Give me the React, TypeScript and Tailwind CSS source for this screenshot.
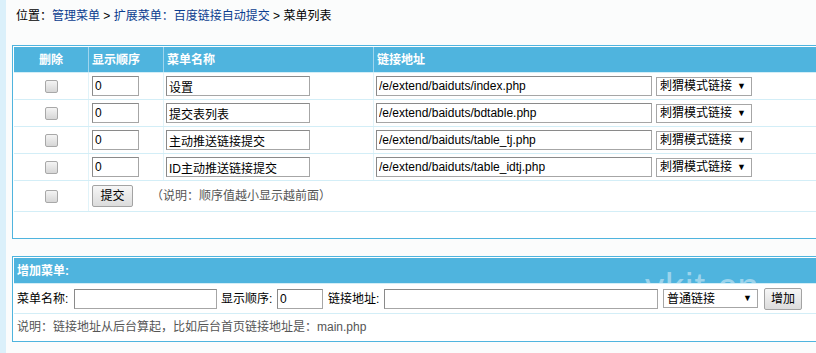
import React from "react";

const rows = [
  { name: "设置", link: "/e/extend/baiduts/index.php" },
  { name: "提交表列表", link: "/e/extend/baiduts/bdtable.php" },
  { name: "主动推送链接提交", link: "/e/extend/baiduts/table_tj.php" },
  { name: "ID主动推送链接提交", link: "/e/extend/baiduts/table_idtj.php" },
];

function Checkbox() {
  return (
    <span className="block w-[13px] h-[13px] rounded-[2px] border border-[#a8a8a8] bg-gradient-to-b from-[#f4f4f4] to-[#d6d6d6]" />
  );
}

function TextBox({ value, className }: { value: string; className: string }) {
  return (
    <input
      readOnly
      value={value}
      className={`h-[20px] border border-[#a6a6a6] border-t-[#8a8a8a] border-l-[#8a8a8a] bg-white px-[2px] text-[12px] text-black outline-none ${className}`}
    />
  );
}

function FakeSelect({ label, className }: { label: string; className: string }) {
  return (
    <div
      className={`h-[19px] flex items-center justify-between border border-[#a6a6a6] bg-white pl-[3px] pr-[5px] text-[12px] text-black ${className}`}
    >
      <span>{label}</span>
      <span className="text-[9px] leading-none">▼</span>
    </div>
  );
}

function Btn({ label, className }: { label: string; className: string }) {
  return (
    <button className={`h-[22px] rounded-[2px] border border-[#a3a3a3] bg-gradient-to-b from-[#f6f6f6] to-[#dcdcdc] text-[12px] text-black ${className}`}>
      {label}
    </button>
  );
}

export default function App() {
  return (
    <div className="min-h-[353px] overflow-hidden border-l-[6px] border-[#dbf0fa] bg-[#fbfcfc] text-[12px] text-black font-['Liberation_Sans','Noto_Sans_CJK_SC',sans-serif]">
      {/* breadcrumb */}
      <div className="h-[45px] pt-[8px] pl-[10px] leading-[16px]">
        位置：<span className="text-[#0b3d8f]">管理菜单</span> &gt;{" "}
        <span className="text-[#0b3d8f]">扩展菜单：百度链接自动提交</span> &gt; 菜单列表
      </div>

      {/* menu list */}
      <div className="ml-[6px] w-[840px] border border-[#4fb4de] bg-white p-px">
        <div className="flex h-[25px] items-center bg-[#4fb4de] font-bold text-white">
          <div className="w-[74px] text-center">删除</div>
          <div className="w-[75px] h-full flex items-center border-l border-[#9fd5ee] pl-[3px]">显示顺序</div>
          <div className="w-[210px] h-full flex items-center border-l border-[#9fd5ee] pl-[3px]">菜单名称</div>
          <div className="flex-1 h-full flex items-center border-l border-[#9fd5ee] pl-[3px]">链接地址</div>
        </div>
        {rows.map((r) => (
          <div key={r.link} className="flex h-[27px] border-t border-[#d3eef7]">
            <div className="w-[74px] flex items-center justify-center">
              <Checkbox />
            </div>
            <div className="w-[75px] flex items-center border-l border-[#e1f3f9] pl-[3px]">
              <TextBox value="0" className="w-[47px]" />
            </div>
            <div className="w-[210px] flex items-center border-l border-[#e1f3f9] pl-[2px]">
              <TextBox value={r.name} className="w-[144px]" />
            </div>
            <div className="flex-1 flex items-center gap-[4px] border-l border-[#e1f3f9] pl-[2px]">
              <TextBox value={r.link} className="w-[276px]" />
              <FakeSelect label="刺猬模式链接" className="w-[96px]" />
            </div>
          </div>
        ))}
        <div className="flex h-[31px] border-t border-[#d3eef7]">
          <div className="w-[74px] flex items-center justify-center">
            <Checkbox />
          </div>
          <div className="flex-1 flex items-center border-l border-[#e1f3f9] pl-[3px]">
            <Btn label="提交" className="w-[41px]" />
            <span className="ml-[18px] text-[#555]">（说明：顺序值越小显示越前面）</span>
          </div>
        </div>
        <div className="h-[26px] border-t border-[#d3eef7]" />
      </div>

      {/* add menu */}
      <div className="relative mt-[17px] ml-[6px] w-[840px] border border-[#4fb4de] bg-white p-px">
        <div className="flex h-[25px] items-center bg-[#4fb4de] pl-[3px] font-bold text-white">增加菜单:</div>
        <div className="flex h-[30px] items-center border-t border-[#d3eef7] pl-[3px]">
          <span className="w-[57px]">菜单名称:</span>
          <TextBox value="" className="w-[143px]" />
          <span className="ml-[4px] w-[56px]">显示顺序:</span>
          <TextBox value="0" className="w-[46px]" />
          <span className="ml-[5px] w-[56px]">链接地址:</span>
          <TextBox value="" className="w-[274px]" />
          <FakeSelect label="普通链接" className="ml-[5px] w-[95px]" />
          <Btn label="增加" className="ml-[6px] w-[38px]" />
        </div>
        <div className="flex h-[27px] items-center border-t border-[#d3eef7] pl-[3px] text-[#555]">
          说明：链接地址从后台算起，比如后台首页链接地址是：main.php
        </div>
        {/* watermark, clipped to the header band */}
        <div className="pointer-events-none absolute left-[632px] top-px h-[25px] w-[140px] overflow-hidden">
          <span className="block pt-[10px] text-[38px] leading-none tracking-[1px] text-white/45">ykit.cn</span>
        </div>
      </div>
    </div>
  );
}
